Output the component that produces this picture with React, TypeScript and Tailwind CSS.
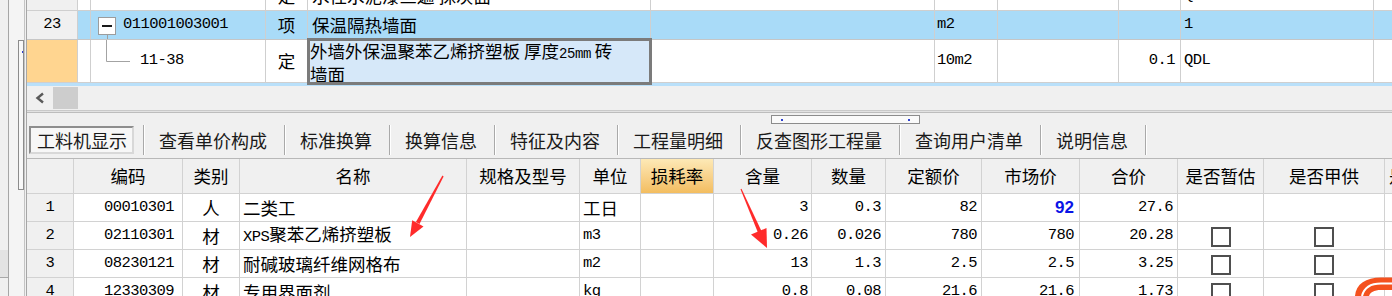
import React from "react";

const MONO = "font-['Liberation_Mono',monospace] text-[15.5px] tracking-[-0.55px]";
const TC = "shrink-0 border-r border-[#cfcfcf] flex items-center overflow-hidden whitespace-nowrap";
const BC = "shrink-0 border-r border-[#d2d2d2] flex items-center overflow-hidden whitespace-nowrap";

function CheckBox() {
  return <div className="w-[20px] h-[20px] border-2 border-[#4f4f4f] bg-white mt-[2px]" />;
}

type BRow = {
  n: string;
  code: string;
  type: string;
  name: React.ReactNode;
  unit: React.ReactNode;
  content: string;
  qty: string;
  quota: string;
  market: React.ReactNode;
  total: string;
  cb: boolean;
};

const rows: BRow[] = [
  {
    n: "1",
    code: "00010301",
    type: "人",
    name: "二类工",
    unit: <span>工日</span>,
    content: "3",
    qty: "0.3",
    quota: "82",
    market: (
      <span className="font-['Liberation_Sans',sans-serif] font-bold text-[17px] tracking-normal text-[#0a14e6]">92</span>
    ),
    total: "27.6",
    cb: false,
  },
  {
    n: "2",
    code: "02110301",
    type: "材",
    name: (
      <span>
        <span className={MONO}>XPS</span>聚苯乙烯挤塑板
      </span>
    ),
    unit: <span className={MONO}>m3</span>,
    content: "0.26",
    qty: "0.026",
    quota: "780",
    market: "780",
    total: "20.28",
    cb: true,
  },
  {
    n: "3",
    code: "08230121",
    type: "材",
    name: "耐碱玻璃纤维网格布",
    unit: <span className={MONO}>m2</span>,
    content: "13",
    qty: "1.3",
    quota: "2.5",
    market: "2.5",
    total: "3.25",
    cb: true,
  },
  {
    n: "4",
    code: "12330309",
    type: "材",
    name: "专用界面剂",
    unit: <span className={MONO}>kg</span>,
    content: "0.8",
    qty: "0.08",
    quota: "21.6",
    market: "21.6",
    total: "1.73",
    cb: true,
  },
];

const tabs = ["查看单价构成", "标准换算", "换算信息", "特征及内容", "工程量明细", "反查图形工程量", "查询用户清单", "说明信息"];

function Sep() {
  return <div className="shrink-0 w-[2px] h-[30px] mt-[1px] border-l border-[#a9a9a9] border-r border-r-white" />;
}

function LeftStrip() {
  return (
    <div className="w-[26px] shrink-0 flex h-full">
      <div className="w-[8px] shrink-0 bg-[#f0f0f0] flex flex-col">
        <div className="mt-[250px] h-[28px] bg-[#e3e3e3] border-b border-[#a8a8a8]" />
      </div>
      <div className="w-px shrink-0 bg-[#a6a6a6]" />
      <div className="w-[9px] shrink-0 bg-[#f4f4f4]" />
      <div className="w-[6px] shrink-0 bg-[#f4f4f4] flex flex-col">
        <div className="mt-[40px] h-[150px] border border-[#8c8c8c] bg-[#f8f8f8] flex flex-col items-end">
          <div className="mt-[10px] w-[1px] h-[2px] bg-[#3040d0]" />
        </div>
      </div>
      <div className="w-px shrink-0 bg-[#c4c4c4]" />
      <div className="w-px shrink-0 bg-[#f0f0f0]" />
    </div>
  );
}

function TopGrid() {
  return (
    <div className="h-[86px] shrink-0 overflow-hidden bg-white flex flex-col text-[#000]">
      {/* partially visible row */}
      <div className="flex h-[29px] -mt-[18px] border-b border-[#cfcfcf] bg-white shrink-0">
        <div className={`w-[51px] ${TC} bg-[#f0f0f0]`} />
        <div className={`w-[13px] ${TC}`} />
        <div className={`w-[175px] ${TC} pl-[49px] ${MONO}`}>14-101</div>
        <div className={`w-[42px] ${TC} justify-center`}>定</div>
        <div className={`w-[343px] ${TC} pl-[4px]`}>水性水泥漆三遍 抹灰面</div>
        <div className={`w-[284px] ${TC}`} />
        <div className={`w-[63px] ${TC} pl-[2px] ${MONO}`}>10m2</div>
        <div className={`w-[121px] ${TC}`} />
        <div className={`w-[62px] ${TC} justify-end pr-[5px] ${MONO}`}>0.1</div>
        <div className={`w-[193px] ${TC} pl-[3px] ${MONO}`}>QDL</div>
        <div className={`w-[40px] ${TC}`} />
      </div>
      {/* row 23 */}
      <div className="flex h-[29px] border-b border-[#c6c6c6] bg-[#a9dbf8] shrink-0">
        <div className={`w-[51px] ${TC} bg-[#f0f0f0] justify-center ${MONO}`}>23</div>
        <div className={`w-[13px] ${TC}`} />
        <div className={`w-[175px] shrink-0 border-r border-[#cfcfcf] flex items-start overflow-hidden whitespace-nowrap`}>
          <div className="ml-[7px] mt-[6px] flex flex-col items-center shrink-0">
            <div className="w-[18px] h-[18px] bg-white border border-[#9c9c9c] flex items-center justify-center">
              <div className="w-[10px] h-[2px] bg-[#1a1a1a]" />
            </div>
            <div className="w-px h-[6px] bg-[#a0a0a0]" />
          </div>
          <div className={`self-center ml-[7px] ${MONO}`}>011001003001</div>
        </div>
        <div className={`w-[42px] ${TC} justify-center`}>项</div>
        <div className={`w-[343px] ${TC} pl-[4px]`}>保温隔热墙面</div>
        <div className={`w-[284px] ${TC}`} />
        <div className={`w-[63px] ${TC} pl-[2px] ${MONO}`}>m2</div>
        <div className={`w-[121px] ${TC}`} />
        <div className={`w-[62px] ${TC}`} />
        <div className={`w-[193px] ${TC} pl-[3px] ${MONO}`}>1</div>
        <div className={`w-[40px] ${TC}`} />
      </div>
      {/* row 11-38 */}
      <div className="flex h-[43px] border-b border-[#cfcfcf] bg-white shrink-0">
        <div className={`w-[51px] ${TC} bg-[#ffd590]`} />
        <div className={`w-[13px] ${TC}`} />
        <div className={`w-[175px] ${TC}`}>
          <svg width="49" height="42" className="shrink-0 self-start" viewBox="0 0 49 42">
            <path d="M15.5 0 V21.5 H39" fill="none" stroke="#a3a3a3" strokeWidth="1" />
          </svg>
          <span className={MONO}>11-38</span>
        </div>
        <div className={`w-[42px] ${TC} justify-center`}>定</div>
        <div className="w-[343px] shrink-0 border-r border-[#cfcfcf]">
          <div className="relative z-10 -mt-[2px] -ml-px h-[47px] w-[345px] border-[3px] border-[#7b7b7b] bg-[#d6e8f9] text-[17.5px] leading-[19px] whitespace-nowrap overflow-hidden">
            外墙外保温聚苯乙烯挤塑板 厚度<span className="font-['Liberation_Mono',monospace] text-[14px] tracking-[-0.4px]">25mm</span> 砖
            <br />
            墙面
          </div>
        </div>
        <div className={`w-[284px] ${TC}`} />
        <div className={`w-[63px] ${TC} pl-[2px] ${MONO}`}>10m2</div>
        <div className={`w-[121px] ${TC}`} />
        <div className={`w-[62px] ${TC} justify-end pr-[5px] ${MONO}`}>0.1</div>
        <div className={`w-[193px] ${TC} pl-[3px] ${MONO}`}>QDL</div>
        <div className={`w-[40px] ${TC}`} />
      </div>
      <div className="h-[3px] shrink-0 bg-[#b9e0fa]" />
    </div>
  );
}

function BottomGrid() {
  const headers: { t: string; w: string; extra?: string }[] = [
    { t: "", w: "w-[47px]" },
    { t: "编码", w: "w-[109px]" },
    { t: "类别", w: "w-[57px]" },
    { t: "名称", w: "w-[227px]" },
    { t: "规格及型号", w: "w-[113px]" },
    { t: "单位", w: "w-[61px]" },
    { t: "损耗率", w: "w-[73px]", extra: "bg-linear-to-b from-[#fde9b6] to-[#f3bd5f]" },
    { t: "含量", w: "w-[98px]" },
    { t: "数量", w: "w-[74px]" },
    { t: "定额价", w: "w-[96px]" },
    { t: "市场价", w: "w-[98px]" },
    { t: "合价", w: "w-[98px]" },
    { t: "是否暂估", w: "w-[86px]" },
    { t: "是否甲供", w: "w-[121px]" },
  ];
  return (
    <div className="flex-1 min-h-0 border-t border-[#b8b8b8] bg-white overflow-hidden text-[#000]">
      <div className="flex h-[35px] border-b border-[#d2d2d2] bg-[#f0f0f0]">
        {headers.map((h, i) => (
          <div key={i} className={`${h.w} ${BC} justify-center ${h.extra ?? ""}`}>
            {h.t}
          </div>
        ))}
        <div className={`w-[80px] ${BC} pl-[4px]`}>是否</div>
      </div>
      {rows.map((r) => (
        <div key={r.n} className="flex h-[28px] border-b border-[#d2d2d2] bg-white">
          <div className={`w-[47px] ${BC} justify-center bg-[#f0f0f0] ${MONO}`}>{r.n}</div>
          <div className={`w-[109px] ${BC} justify-end pr-[8px] ${MONO}`}>{r.code}</div>
          <div className={`w-[57px] ${BC} justify-center`}>{r.type}</div>
          <div className={`w-[227px] ${BC} pl-[3px]`}>{r.name}</div>
          <div className={`w-[113px] ${BC}`} />
          <div className={`w-[61px] ${BC} pl-[3px]`}>{r.unit}</div>
          <div className={`w-[73px] ${BC}`} />
          <div className={`w-[98px] ${BC} justify-end pr-[3px] ${MONO}`}>{r.content}</div>
          <div className={`w-[74px] ${BC} justify-end pr-[4px] ${MONO}`}>{r.qty}</div>
          <div className={`w-[96px] ${BC} justify-end pr-[4px] ${MONO}`}>{r.quota}</div>
          <div className={`w-[98px] ${BC} justify-end pr-[5px] ${MONO}`}>{r.market}</div>
          <div className={`w-[98px] ${BC} justify-end pr-[4px] ${MONO}`}>{r.total}</div>
          <div className={`w-[86px] ${BC} justify-center`}>{r.cb ? <CheckBox /> : null}</div>
          <div className={`w-[121px] ${BC} justify-center`}>{r.cb ? <CheckBox /> : null}</div>
          <div className={`w-[80px] ${BC}`} />
        </div>
      ))}
    </div>
  );
}

export default function App() {
  return (
    <div className="relative w-[1392px] h-[296px] overflow-hidden bg-[#f0f0f0] flex font-['Noto_Sans_CJK_SC',sans-serif] text-[17.5px] leading-none text-[#111]">
      <LeftStrip />
      <div className="flex-1 min-w-0 flex flex-col border-l border-[#a6a6a6] overflow-hidden">
        <TopGrid />
        {/* horizontal scrollbar */}
        <div className="h-[24px] shrink-0 bg-[#f0f0f0] flex items-center">
          <svg width="12" height="12" viewBox="0 0 12 12" className="ml-[7px] shrink-0">
            <polyline points="9,1.5 3.5,6 9,10.5" fill="none" stroke="#5a5a5a" strokeWidth="2.4" />
          </svg>
          <div className="ml-[7px] w-[25px] h-[22px] bg-[#cdcdcd]" />
        </div>
        <div className="h-[3px] shrink-0 border-t border-[#c9c9c9] border-b border-b-[#bdbdbd] bg-[#e2e2e2]" />
        {/* splitter grip */}
        <div className="h-[11px] shrink-0 flex">
          <div className="ml-[744px] mt-[2px] w-[149px] h-[9px] border border-[#8c8c8c] bg-[#fafafa] flex items-center justify-between px-[9px]">
            <div className="w-[2px] h-[2px] bg-[#2d3fd0]" />
            <div className="w-[2px] h-[2px] bg-[#2d3fd0]" />
          </div>
        </div>
        {/* tab bar */}
        <div className="h-[34px] shrink-0 flex items-start pl-[2px] text-[18px] text-[#1a1a1a]">
          <div className="mt-[2px] w-[105px] h-[28px] shrink-0 border-2 border-t-[#8e8e8e] border-l-[#8e8e8e] border-b-[#d8d8d8] border-r-[#d8d8d8] bg-[#f7f7f7] flex items-center pl-[6px] whitespace-nowrap">
            工料机显示
          </div>
          <div className="w-[9px] shrink-0" />
          <Sep />
          {tabs.map((t) => (
            <React.Fragment key={t}>
              <div className="mt-[2px] h-[28px] shrink-0 flex items-center pl-[14px] pr-[17px] whitespace-nowrap">{t}</div>
              <Sep />
            </React.Fragment>
          ))}
        </div>
        <BottomGrid />
      </div>
      {/* annotation arrows and tray logo */}
      <svg className="absolute inset-0 pointer-events-none z-20" width="1392" height="296" viewBox="0 0 1392 296">
        <polygon points="443.6,176.4 442.4,175.6 415.9,221.9 419.5,223.9" fill="#ff2b2b" />
        <polygon points="410,237 412.2,220.2 423.5,226.4" fill="#ff2b2b" />
        <polygon points="740.5,189.2 741.5,188.8 761.8,231.7 758.2,233.3" fill="#ff2b2b" />
        <polygon points="767,248 751,234.5 766.5,228" fill="#ff2b2b" />
        <path d="M1355 296 C1356 284 1366 277.5 1381 277.5 L1392 277.5 L1392 290 L1381 290 C1374 290 1370 292.5 1369 296 Z" fill="#f4511e" />
        <path d="M1362 296 C1364 288 1370 283.5 1381 283.5 L1392 283.5" fill="none" stroke="#ffffff" strokeWidth="2" />
      </svg>
    </div>
  );
}
